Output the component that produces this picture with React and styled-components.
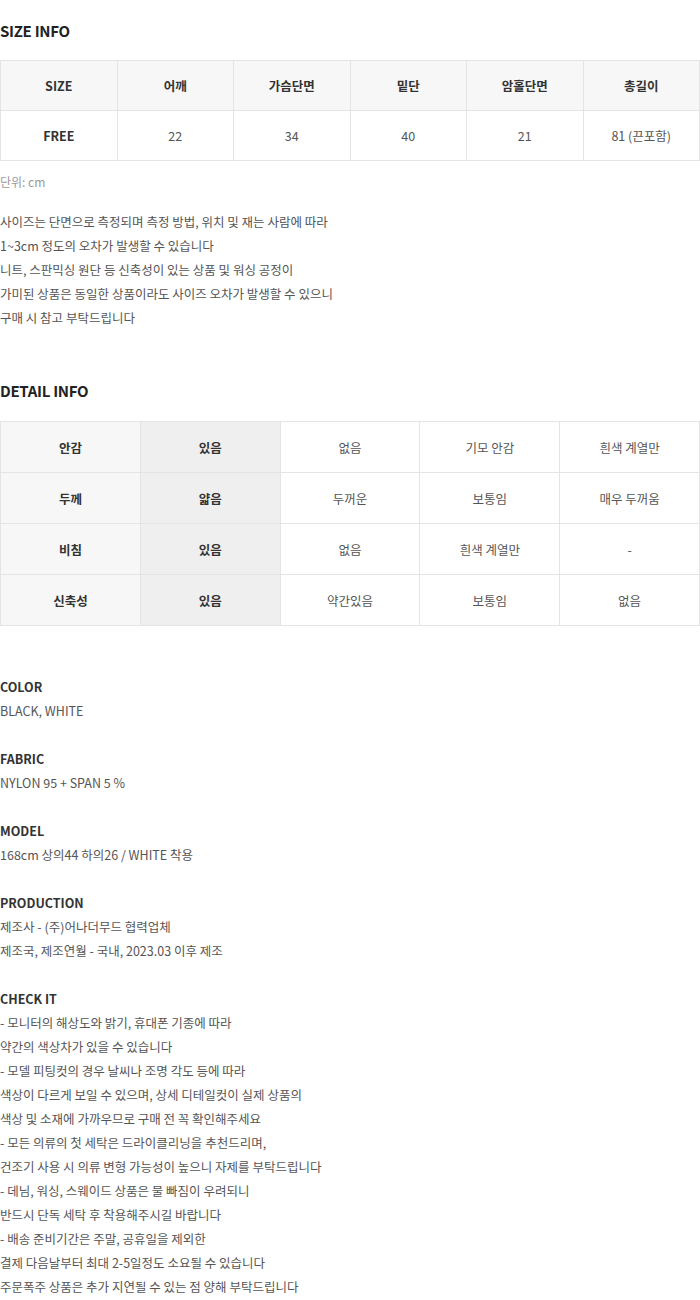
import styled, { createGlobalStyle } from 'styled-components';

const GlobalStyle = createGlobalStyle`
  body {
    margin: 0;
    background: #fff;
    font-family: "Noto Sans CJK KR", "Noto Sans", sans-serif;
    color: #555;
  }
`;

const Page = styled.div`
  width: 700px;
  padding-bottom: 1px;
`;

const Title = styled.h2`
  margin: ${(props) => props.$top || 0}px 0 0;
  font-size: 15px;
  line-height: 24px;
  font-weight: 700;
  color: #222;
  letter-spacing: -0.3px;
`;

const Table = styled.table`
  width: 100%;
  margin-top: ${(props) => props.$top || 17}px;
  border-collapse: collapse;
  table-layout: fixed;
  font-size: 12.5px;

  td {
    border: 1px solid #e4e4e4;
    text-align: center;
    height: ${(props) => props.$rowHeight}px;
    padding: 0;
    color: #555;
  }
`;

const HeadCell = styled.td`
  && {
    background: ${(props) => props.$bg || '#f7f7f7'};
    font-weight: 700;
    color: #333;
  }
`;

const Unit = styled.p`
  margin: 9px 0 0;
  font-size: 12px;
  line-height: 24px;
  color: #999;
`;

const Text = styled.p`
  margin: ${(props) => props.$top || 0}px 0 0;
  font-size: 12.5px;
  line-height: 24px;
  color: #555;
`;

const Group = styled.div`
  margin-top: ${(props) => props.$top || 24}px;
`;

const Label = styled.div`
  font-size: 12.5px;
  line-height: 24px;
  font-weight: 700;
  color: #333;
`;

const sizeHead = ['SIZE', '어깨', '가슴단면', '밑단', '암홀단면', '총길이'];
const sizeRow = ['22', '34', '40', '21', '81 (끈포함)'];

const detail = [
  ['안감', '있음', '없음', '기모 안감', '흰색 계열만'],
  ['두께', '얇음', '두꺼운', '보통임', '매우 두꺼움'],
  ['비침', '있음', '없음', '흰색 계열만', '-'],
  ['신축성', '있음', '약간있음', '보통임', '없음'],
];

const groups = [
  { label: 'COLOR', lines: ['BLACK, WHITE'] },
  { label: 'FABRIC', lines: ['NYLON 95 + SPAN 5 %'] },
  { label: 'MODEL', lines: ['168cm 상의44 하의26 / WHITE 착용'] },
  {
    label: 'PRODUCTION',
    lines: ['제조사 - (주)어나더무드 협력업체', '제조국, 제조연월 - 국내, 2023.03 이후 제조'],
  },
  {
    label: 'CHECK IT',
    lines: [
      '- 모니터의 해상도와 밝기, 휴대폰 기종에 따라',
      '약간의 색상차가 있을 수 있습니다',
      '- 모델 피팅컷의 경우 날씨나 조명 각도 등에 따라',
      '색상이 다르게 보일 수 있으며, 상세 디테일컷이 실제 상품의',
      '색상 및 소재에 가까우므로 구매 전 꼭 확인해주세요',
      '- 모든 의류의 첫 세탁은 드라이클리닝을 추천드리며,',
      '건조기 사용 시 의류 변형 가능성이 높으니 자제를 부탁드립니다',
      '- 데님, 워싱, 스웨이드 상품은 물 빠짐이 우려되니',
      '반드시 단독 세탁 후 착용해주시길 바랍니다',
      '- 배송 준비기간은 주말, 공휴일을 제외한',
      '결제 다음날부터 최대 2-5일정도 소요될 수 있습니다',
      '주문폭주 상품은 추가 지연될 수 있는 점 양해 부탁드립니다',
    ],
  },
];

const App = () => {
  return (
    <Page>
      <GlobalStyle />
      <Title $top={19}>SIZE INFO</Title>
      <Table $rowHeight={49}>
        <tbody>
          <tr>
            {sizeHead.map((h) => (
              <HeadCell key={h}>{h}</HeadCell>
            ))}
          </tr>
          <tr>
            <HeadCell $bg="#fff">FREE</HeadCell>
            {sizeRow.map((v, i) => (
              <td key={i}>{v}</td>
            ))}
          </tr>
        </tbody>
      </Table>
      <Unit>단위: cm</Unit>
      <Text $top={16}>
        사이즈는 단면으로 측정되며 측정 방법, 위치 및 재는 사람에 따라
        <br />
        1~3cm 정도의 오차가 발생할 수 있습니다
        <br />
        니트, 스판믹싱 원단 등 신축성이 있는 상품 및 워싱 공정이
        <br />
        가미된 상품은 동일한 상품이라도 사이즈 오차가 발생할 수 있으니
        <br />
        구매 시 참고 부탁드립니다
      </Text>

      <Title $top={49}>DETAIL INFO</Title>
      <Table $rowHeight={50} $top={18}>
        <tbody>
          {detail.map((row) => (
            <tr key={row[0]}>
              <HeadCell>{row[0]}</HeadCell>
              <HeadCell $bg="#efefef">{row[1]}</HeadCell>
              {row.slice(2).map((v, i) => (
                <td key={i}>{v}</td>
              ))}
            </tr>
          ))}
        </tbody>
      </Table>

      {groups.map((g, i) => (
        <Group key={g.label} $top={i === 0 ? 49 : 24}>
          <Label>{g.label}</Label>
          {g.lines.map((l) => (
            <Text key={l}>{l}</Text>
          ))}
        </Group>
      ))}
    </Page>
  );
};

export default App;
